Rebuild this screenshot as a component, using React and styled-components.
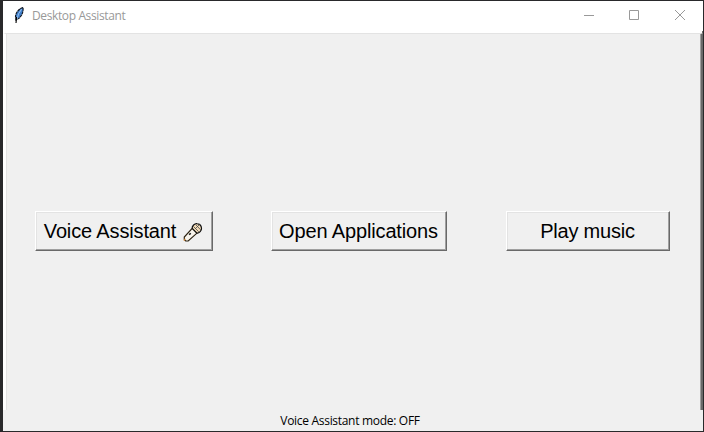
import React from 'react';
import styled, { createGlobalStyle } from 'styled-components';

const GlobalStyle = createGlobalStyle`
  * { box-sizing: border-box; }
  body { margin: 0; overflow: hidden; background: #242426; }
`;

const Window = styled.div`
  width: 704px;
  height: 432px;
  display: flex;
  flex-direction: column;
  background: #f0f0f0;
  border: solid #29292b;
  border-width: 1px 1px 1px 3px;
  font-family: "Open Sans", "Noto Sans", sans-serif;
`;

const TitleBar = styled.header`
  height: 32px;
  flex: none;
  display: flex;
  align-items: flex-start;
  background: linear-gradient(#696969, #696969) right bottom / 1px 2px no-repeat #fff;
`;

const FeatherIcon = styled.svg`
  width: 14px;
  height: 18px;
  margin: 5px 6px 0 9px;
`;

const Title = styled.h1`
  margin: 6px auto 0 0;
  font-size: 12px;
  line-height: 18px;
  font-weight: 400;
  letter-spacing: -0.38px;
  color: #999;
`;

const Controls = styled.div`
  display: flex;
`;

const Control = styled.button`
  width: 45.5px;
  height: 30px;
  padding: 8px 0 0;
  border: 0;
  background: none;
  display: flex;
  justify-content: center;
`;

const MaximizeControl = styled(Control)`
  padding-right: 1.5px;
`;

const Frame = styled.main`
  height: 377px;
  flex: none;
  display: grid;
  grid-template-columns: 236px 235px 164px;
  align-items: start;
  padding: 177px 0 0 29px;
  border: solid;
  border-width: 1px 2px 0 3px;
  border-color: #e3e3e3 #696969 #696969 #fff;
  box-shadow: inset 1px 0 #e3e3e3, inset -1px 0 #a0a0a0;
`;

const ActionButton = styled.button`
  width: ${(p) => p.$width}px;
  height: 40px;
  padding: 0 1px 1px 0;
  display: flex;
  align-items: center;
  justify-content: center;
  background: #f0f0f0;
  color: #000;
  border: solid 1px;
  border-color: #fff #696969 #696969 #fff;
  box-shadow: inset -1px -1px #a0a0a0, inset 1px 1px #e3e3e3;
  font: 20px/24px "Liberation Sans", Arial, sans-serif;
  letter-spacing: ${(p) => p.$tracking}px;
  white-space: nowrap;
`;

const MicIcon = styled.svg`
  width: 20px;
  height: 20px;
  margin: 3px 0 0 7px;
`;

const Status = styled.footer`
  flex: 1;
  padding: 1px 6px 0 0;
  text-align: center;
  font-size: 12px;
  line-height: 20px;
  letter-spacing: -0.3px;
  color: #000;
`;

const Feather = () => (
  <FeatherIcon viewBox="0 0 14 18">
    <path d="M11 1.500C7.500 2.300 3.800 6.200 3.500 10.500l.4 3.500 2.900-1.600C9.900 9.800 11.600 5.500 11 1.500Z" fill="#3f7fcb" stroke="#10141c" strokeWidth="1.100" strokeDasharray="3 .5" />
    <path d="M9.600 3.200Q5.800 7.500 5 13" fill="none" stroke="#9cc6f5" strokeWidth="1" />
    <path d="M4.600 11 4 17" stroke="#000" strokeWidth="1.100" />
  </FeatherIcon>
);

const Microphone = () => (
  <MicIcon viewBox="0 0 20 20" fill="none" stroke="#111" strokeWidth="1.200">
    <path d="M9.200 6.300 1.300 15.100v2.500l1.400 1.400h2.500l8.800-7.900Z" fill="#f8f4ec" stroke="#2b2110" />
    <path d="M2.200 16.800 1 18.800" stroke="#d4893a" />
    <path d="M9.200 6.300C8.900 4 11.600 1.300 14.100 1.700c2.300.300 4.200 2.200 4.400 4.500.200 2.600-2.200 5-4.500 4.900Z" fill="#f3dcb8" />
    <path d="m10.500 4.500 5.300 5.300M12.600 2.500l5.100 5.400M12 7l4.700-4.700" stroke="#4b4b4b" strokeWidth=".8" />
    <path d="m7.700 11.300-1.500 1.500" strokeWidth="1.600" />
  </MicIcon>
);

export default function App() {
  return (
    <>
      <GlobalStyle />
      <Window>
        <TitleBar>
          <Feather />
          <Title>Desktop Assistant</Title>
          <Controls>
            <Control aria-label="Minimize">
              <svg width="12" height="12" stroke="#999"><path d="M1 6.500h10" /></svg>
            </Control>
            <MaximizeControl aria-label="Maximize">
              <svg width="12" height="12" fill="none" stroke="#999"><path d="M1.500 1.500h9v9h-9Z" /></svg>
            </MaximizeControl>
            <Control aria-label="Close">
              <svg width="12" height="12" stroke="#999"><path d="m1 1 10 10M11 1 1 11" /></svg>
            </Control>
          </Controls>
        </TitleBar>
        <Frame>
          <ActionButton $width={178} $tracking={-0.14}>Voice Assistant<Microphone /></ActionButton>
          <ActionButton $width={176} $tracking={-0.14}>Open Applications</ActionButton>
          <ActionButton $width={164} $tracking={-0.2}>Play music</ActionButton>
        </Frame>
        <Status>Voice Assistant mode: OFF</Status>
      </Window>
    </>
  );
}
